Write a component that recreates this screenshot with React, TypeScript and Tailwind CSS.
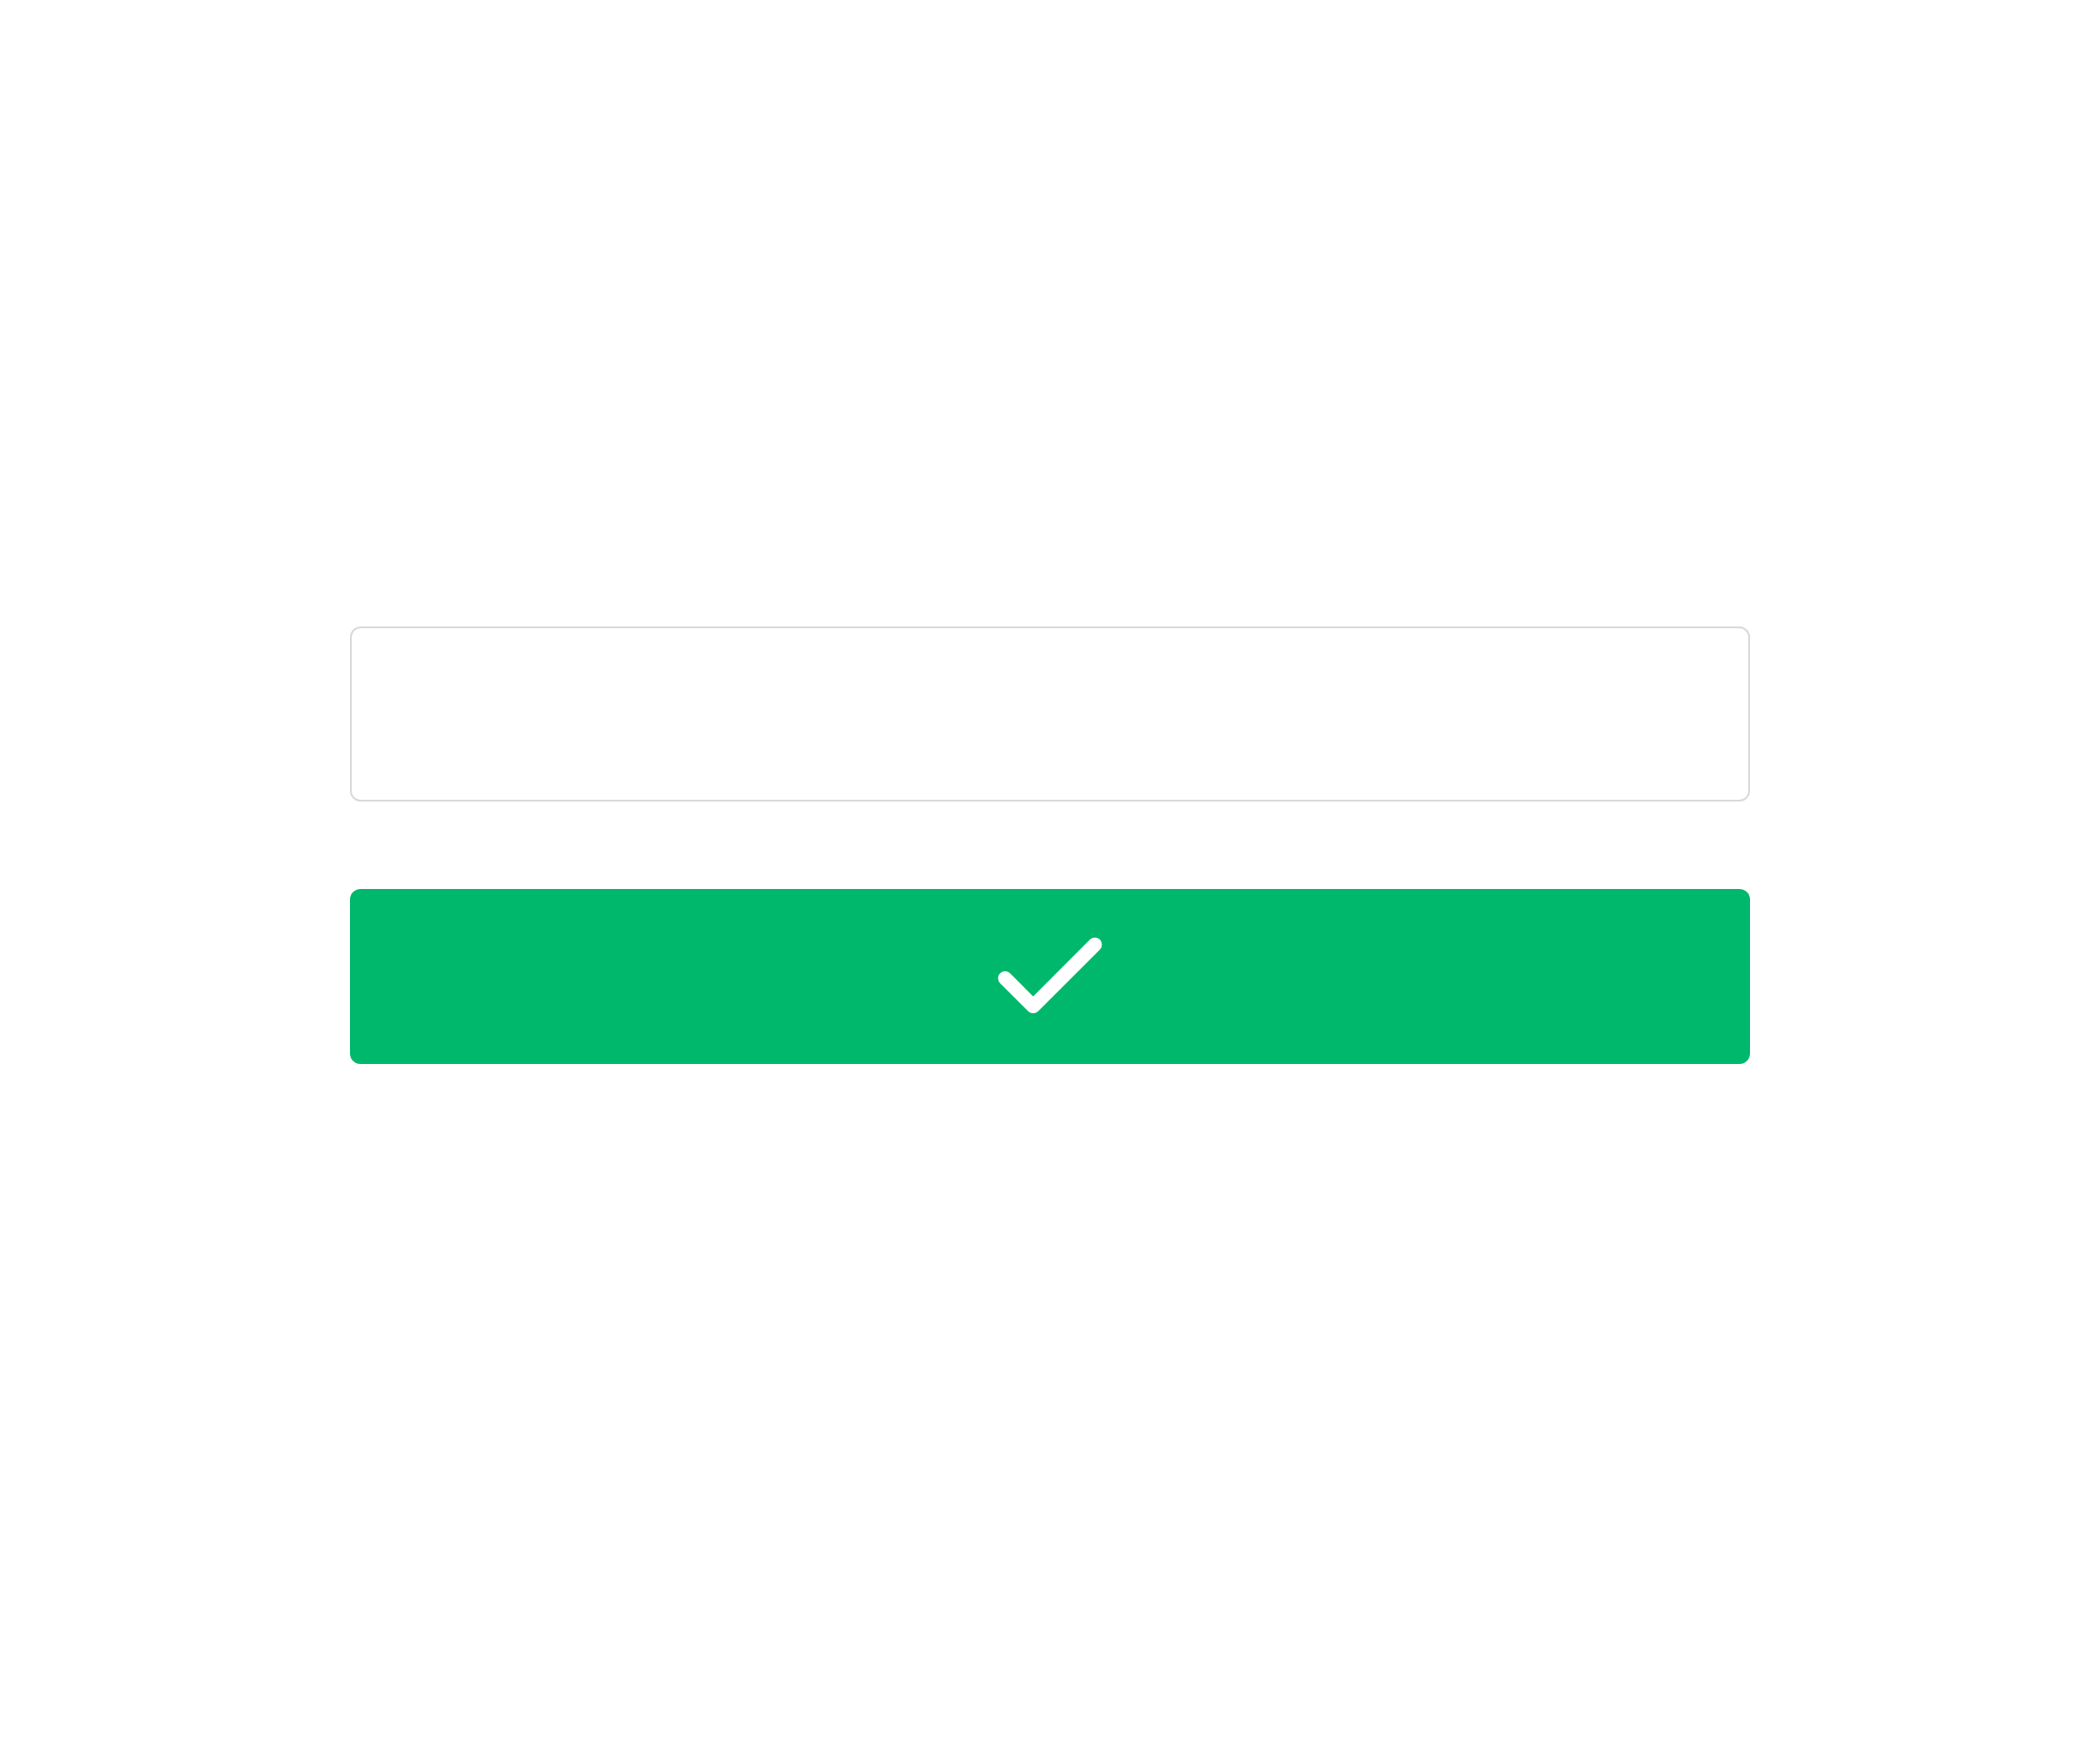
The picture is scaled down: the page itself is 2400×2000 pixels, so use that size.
import React, { useState } from 'react';
import { Check } from 'lucide-react';

const App: React.FC = () => {
  const [value, setValue] = useState('');

  return (
    <div className="min-h-screen bg-white">
      <div className="w-[1600px] mx-auto pt-[716px] flex flex-col gap-[100px]">
        {/* Text field */}
        <input
          type="text"
          value={value}
          onChange={(e) => setValue(e.target.value)}
          className="h-[200px] w-full rounded-[12px] border-2 border-[#d9d9d9] bg-white px-10 text-[56px] text-[#333] outline-none font-['Liberation_Sans',sans-serif]"
        />

        {/* Confirm button */}
        <button
          type="button"
          className="h-[200px] w-full rounded-[12px] bg-[#00b86b] flex items-center justify-center"
        >
          <Check size={154} strokeWidth={2.5} color="#ffffff" className="translate-y-[2px]" />
        </button>
      </div>
    </div>
  );
};

export default App;
